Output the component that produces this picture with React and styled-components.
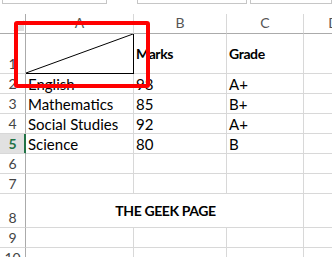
import React from "react";
import styled, { createGlobalStyle } from "styled-components";

const Global = createGlobalStyle`
  html, body { margin: 0; padding: 0; background: #fff; overflow: hidden; }
  body { font-family: Lato, "Liberation Sans", sans-serif; }
`;

const Page = styled.div`
  position: relative;
  width: 332px;
  height: 257px;
  overflow: hidden;
  background: #fff;
`;

const TopBar = styled.div`
  display: flex;
  align-items: flex-start;
  height: 14px;
`;

const FieldBox = styled.div`
  box-sizing: border-box;
  height: 4px;
  border: 1px solid #c6c6c6;
  border-top: none;
  margin-left: ${(p) => p.$ml}px;
  width: ${(p) => (p.$w ? `${p.$w}px` : "auto")};
  flex: ${(p) => (p.$w ? "none" : 1)};
`;

const Sheet = styled.div`
  display: grid;
  grid-template-columns: 26px 108px 93px 77px 60px;
  grid-template-rows: 20px 40px repeat(6, 20px) 34px 20px 20px;
  width: 364px;
  font-size: 15px;
  color: #000;
`;

const Corner = styled.div`
  box-sizing: border-box;
  border-right: 1px solid #ababab;
  border-bottom: 1px solid #ababab;
  display: flex;
  align-items: flex-end;
  justify-content: flex-end;
  padding: 0 1px 2px 0;
`;

const SelectAll = styled.div`
  width: 0;
  height: 0;
  border-left: 11px solid transparent;
  border-bottom: 11px solid #dcdcdc;
`;

const ColHeader = styled.div`
  box-sizing: border-box;
  border-right: 1px solid #d8d8d8;
  border-bottom: 1px solid #ababab;
  display: flex;
  align-items: center;
  justify-content: center;
  color: #555;
  font-size: 14px;
  padding-bottom: 2px;
`;

const RowHeader = styled.div`
  box-sizing: border-box;
  border-right: 1px solid ${(p) => (p.$active ? "#217346" : "#ababab")};
  border-bottom: 1px solid #d8d8d8;
  box-shadow: ${(p) => (p.$active ? "inset -1px 0 0 #217346" : "none")};
  background: ${(p) => (p.$active ? "#e1e1e1" : "#fff")};
  color: ${(p) => (p.$active ? "#217346" : "#444")};
  font-weight: ${(p) => (p.$active ? 700 : 400)};
  display: flex;
  align-items: flex-end;
  justify-content: center;
  padding-bottom: 1px;
  font-size: 14px;
`;

const Cell = styled.div`
  box-sizing: border-box;
  border-right: 1px solid ${(p) => (p.$boxed ? "#000" : "#d8d8d8")};
  border-bottom: 1px solid ${(p) => (p.$boxed ? "#000" : "#d8d8d8")};
  display: flex;
  align-items: center;
  justify-content: ${(p) => (p.$center ? "center" : "flex-start")};
  padding: ${(p) => (p.$boxed ? "0" : "0 0 0 2px")};
  font-weight: ${(p) => (p.$bold ? 700 : 400)};
  font-size: ${(p) => (p.$bold ? "14px" : "15px")};
  letter-spacing: ${(p) => (p.$bold ? "-0.4px" : "normal")};
  grid-column: ${(p) => (p.$span ? `span ${p.$span}` : "auto")};
  white-space: nowrap;
  overflow: hidden;
`;

const Diagonal = styled.svg`
  display: block;
  width: 100%;
  height: 100%;
`;

const Highlight = styled.div`
  position: absolute;
  left: 14px;
  top: 21px;
  width: 136px;
  height: 67px;
  box-sizing: border-box;
  border: 4px solid #ff0000;
  border-radius: 3px;
  pointer-events: none;
`;

const cols = ["A", "B", "C", "D"];

const data = [
  ["English", "98", "A+"],
  ["Mathematics", "85", "B+"],
  ["Social Studies", "92", "A+"],
  ["Science", "80", "B"],
];

export default function App() {
  return (
    <Page>
      <Global />
      <TopBar>
        <FieldBox $ml={2} $w={105} />
        <FieldBox $ml={30} $w={110} />
        <FieldBox $ml={3} />
      </TopBar>
      <Sheet>
        <Corner>
          <SelectAll />
        </Corner>
        {cols.map((c) => (
          <ColHeader key={c}>{c}</ColHeader>
        ))}

        <RowHeader>1</RowHeader>
        <Cell $boxed>
          <Diagonal viewBox="0 0 100 100" preserveAspectRatio="none">
            <line
              x1="0"
              y1="100"
              x2="100"
              y2="0"
              stroke="#000"
              strokeWidth="1"
              vectorEffect="non-scaling-stroke"
            />
          </Diagonal>
        </Cell>
        <Cell $bold>Marks</Cell>
        <Cell $bold>Grade</Cell>
        <Cell />

        {data.map((row, i) => (
          <React.Fragment key={row[0]}>
            <RowHeader $active={i === 3}>{i + 2}</RowHeader>
            <Cell>{row[0]}</Cell>
            <Cell>{row[1]}</Cell>
            <Cell>{row[2]}</Cell>
            <Cell />
          </React.Fragment>
        ))}

        {[6, 7].map((n) => (
          <React.Fragment key={n}>
            <RowHeader>{n}</RowHeader>
            <Cell />
            <Cell />
            <Cell />
            <Cell />
          </React.Fragment>
        ))}

        <RowHeader>8</RowHeader>
        <Cell $span={3} $center $bold>
          THE GEEK PAGE
        </Cell>
        <Cell />

        {[9, 10].map((n) => (
          <React.Fragment key={n}>
            <RowHeader>{n}</RowHeader>
            <Cell />
            <Cell />
            <Cell />
            <Cell />
          </React.Fragment>
        ))}
      </Sheet>
      <Highlight />
    </Page>
  );
}
